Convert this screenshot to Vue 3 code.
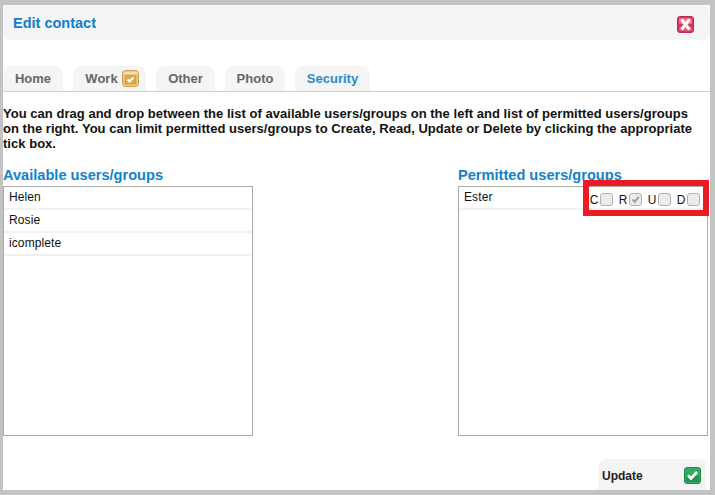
<script setup>
const tabs = [
  { name: 'Home', w: 60 },
  { name: 'Work', w: 73, icon: true },
  { name: 'Other', w: 59 },
  { name: 'Photo', w: 60 },
  { name: 'Security', w: 75, active: true },
]
const available = ['Helen', 'Rosie', 'icomplete']
const perms = [
  { l: 'C', on: false },
  { l: 'R', on: true },
  { l: 'U', on: false },
  { l: 'D', on: false },
]
</script>

<template>
  <div class="frame">
    <div class="panel">
      <header class="head">
        <h1>Edit contact</h1>
        <svg class="close" width="17" height="17" viewBox="0 0 17 17">
          <rect x="0.5" y="0.5" width="16" height="16" rx="2.5" fill="#d8345f" stroke="#c02a50"/>
          <rect x="2" y="2" width="13" height="6" rx="1" fill="#e9708f"/>
          <rect x="2" y="11" width="13" height="4" rx="1" fill="#e05a7c"/>
          <path d="M4.5 3.5l8 10M12.5 3.5l-8 10" stroke="#fff" stroke-width="3.2"/>
        </svg>
      </header>

      <nav class="tabs">
        <div v-for="t in tabs" :key="t.name" class="tab" :class="{ active: t.active, 'has-icon': t.icon }" :style="{ width: t.w + 'px' }">
          {{ t.name }}
          <svg v-if="t.icon" class="tabicon" width="17" height="17" viewBox="0 0 17 17">
            <rect x="0.5" y="0.5" width="16" height="16" rx="3" fill="#e8c98c" stroke="#d3a04e"/>
            <rect x="3" y="5" width="11" height="9" fill="#d9a94f" stroke="#c9973f" stroke-width="0.6"/>
            <rect x="2" y="2" width="13" height="2.5" fill="#f3dfb2"/>
            <path d="M5.5 9.5l2 2 4-4" stroke="#fff" stroke-width="2" fill="none"/>
          </svg>
        </div>
      </nav>

      <p class="intro">You can drag and drop between the list of available users/groups on the left and list of permitted users/groups on the right. You can limit permitted users/groups to Create, Read, Update or Delete by clicking the appropriate tick box.</p>

      <div class="lists">
        <section class="col">
          <h2>Available users/groups</h2>
          <ul class="list">
            <li v-for="a in available" :key="a">{{ a }}</li>
          </ul>
        </section>
        <section class="col">
          <h2>Permitted users/groups</h2>
          <ul class="list">
            <li class="perm">
              <span>Ester</span>
              <span class="checks">
                <label v-for="p in perms" :key="p.l" class="check">
                  {{ p.l }}<span class="box">
                    <svg v-if="p.on" width="11" height="11" viewBox="0 0 11 11"><path d="M2.5 5.5l2.2 2.4 4-5" stroke="#999" stroke-width="1.8" fill="none"/></svg>
                  </span>
                </label>
              </span>
            </li>
          </ul>
          <div class="marker"></div>
        </section>
      </div>

      <div class="foot">
        <button class="update">
          Update
          <svg width="17" height="17" viewBox="0 0 17 17">
            <rect x="0.5" y="0.5" width="16" height="16" rx="2.5" fill="#35ab62" stroke="#23884a"/>
            <rect x="2" y="9" width="13" height="6" rx="1" fill="#1f9450"/>
            <path d="M4 8.5l3 3 6-6.5" stroke="#fff" stroke-width="2.6" fill="none"/>
          </svg>
        </button>
      </div>
    </div>
  </div>
</template>

<style>
html, body { margin: 0; overflow: hidden; }
</style>

<style scoped>
.frame {
  width: 715px;
  height: 495px;
  box-sizing: border-box;
  padding: 5px 5px 5px 3px;
  background: #c3c3c3;
  font-family: "Liberation Sans", Arial, sans-serif;
}
.panel {
  height: 100%;
  background: #fff;
  display: flex;
  flex-direction: column;
}
.head {
  height: 35px;
  flex: none;
  display: flex;
  align-items: center;
  justify-content: space-between;
  padding: 0 16px 0 10px;
  background: #f5f5f5;
  border-radius: 0 8px 8px 8px;
}
h1 {
  margin: 0;
  font-size: 14.5px;
  font-weight: 700;
  color: #0f80cc;
}
.close { margin-top: 3px; }
.tabs {
  margin-top: 26px;
  height: 25px;
  flex: none;
  display: flex;
  gap: 10px;
  border-bottom: 1px solid #cfcfcf;
}
.tab {
  box-sizing: border-box;
  display: flex;
  align-items: center;
  justify-content: center;
  gap: 4px;
  background: #f5f5f5;
  border-radius: 8px 8px 0 0;
  font-size: 13px;
  font-weight: 700;
  color: #666;
}
.tab.has-icon { padding-left: 5px; }
.tab.active { color: #2a8ad0; }
.intro {
  margin: 14px 0 0;
  width: 700px;
  font-size: 13px;
  line-height: 15px;
  letter-spacing: 0.03px;
  font-weight: 700;
  color: #111;
}
.lists {
  margin-top: 16px;
  display: flex;
  justify-content: space-between;
  padding-right: 2px;
}
.col { position: relative; width: 250px; }
h2 {
  margin: 0 0 3px;
  font-size: 14.6px;
  line-height: 16px;
  font-weight: 700;
  color: #1282cc;
}
.list {
  box-sizing: border-box;
  height: 250px;
  margin: 0;
  padding: 0;
  list-style: none;
  border: 1px solid #aaa;
}
.list li {
  box-sizing: border-box;
  height: 23px;
  padding: 3px 5px 0;
  font-size: 12px;
  line-height: 14px;
  letter-spacing: 0.1px;
  color: #111;
  border-bottom: 2px solid #f2f2f2;
}
.list li.perm {
  display: flex;
  justify-content: space-between;
}
.checks {
  display: flex;
  gap: 5.83px;
  margin-top: 3px;
  margin-right: 2px;
  letter-spacing: 0;
}
.check {
  display: flex;
  align-items: center;
  gap: 1.5px;
  height: 13px;
}
.box {
  box-sizing: border-box;
  width: 13px;
  height: 13px;
  display: flex;
  align-items: center;
  justify-content: center;
  background: #ececec;
  border: 1px solid #b0b0b0;
  border-radius: 3px;
}
.marker {
  position: absolute;
  left: 125px;
  top: 13px;
  width: 126px;
  height: 36px;
  box-sizing: border-box;
  border: 6px solid #ed1c24;
}
.foot {
  margin-top: auto;
  display: flex;
  justify-content: flex-end;
  padding-right: 3px;
}
.update {
  box-sizing: border-box;
  width: 109px;
  height: 31px;
  padding: 2px 6px 0 4px;
  display: flex;
  align-items: center;
  justify-content: space-between;
  background: #f5f5f5;
  border: 0;
  border-radius: 8px 8px 0 0;
  font: 700 12px "Liberation Sans", Arial, sans-serif;
  color: #222;
}
</style>
